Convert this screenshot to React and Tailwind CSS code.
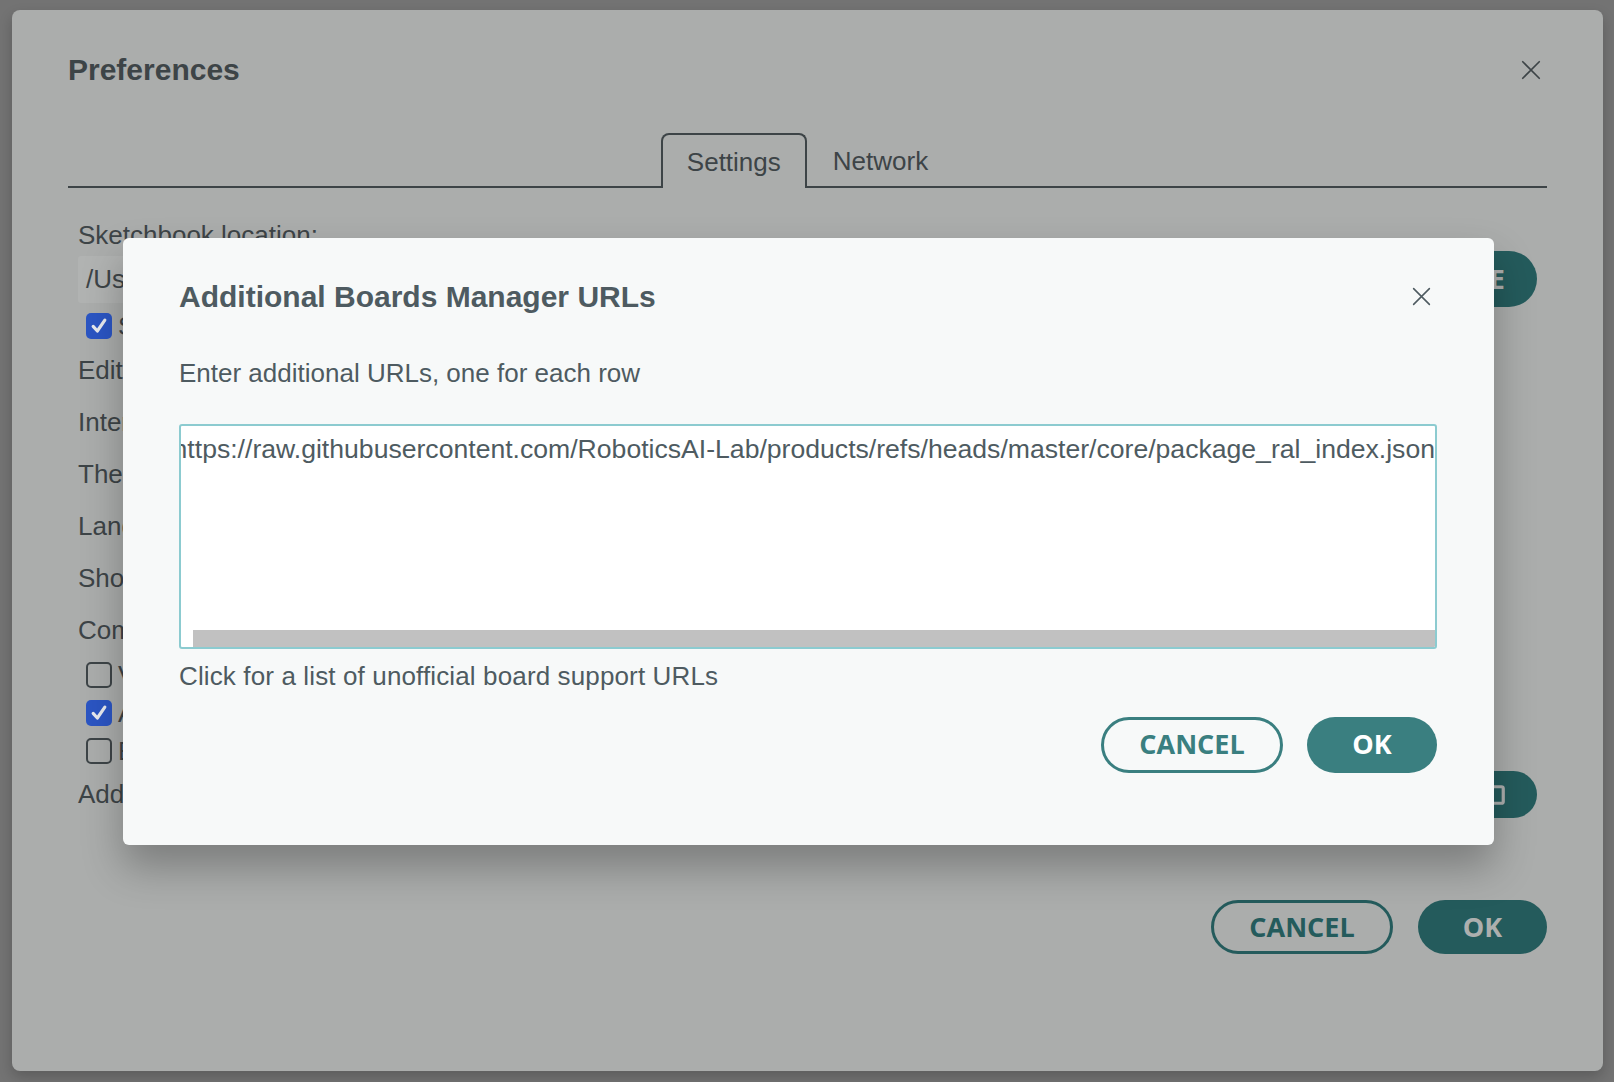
import React from "react";

const URL_TEXT =
  "https://raw.githubusercontent.com/RoboticsAI-Lab/products/refs/heads/master/core/package_ral_index.json";

function CloseIcon({ className }) {
  return (
    <svg viewBox="0 0 24 24" className={className} fill="none" stroke="currentColor" strokeWidth="1.8" strokeLinecap="round">
      <path d="M3 3 L21 21 M21 3 L3 21" />
    </svg>
  );
}

function Checkbox({ checked }) {
  if (checked) {
    return (
      <span className="flex h-[26px] w-[26px] items-center justify-center rounded-[5px] bg-[#2b55c3]">
        <svg viewBox="0 0 24 24" className="h-[20px] w-[20px]" fill="none" stroke="#e8eaee" strokeWidth="3.8" strokeLinecap="round" strokeLinejoin="round">
          <path d="M5 12.5 L10 18 L19 5" />
        </svg>
      </span>
    );
  }
  return <span className="h-[26px] w-[26px] rounded-[5px] border-2 border-[#3d4447]" />;
}

function CheckRow({ checked, label }) {
  return (
    <div className="flex h-[38px] items-center gap-[6px] pl-[8px]">
      <Checkbox checked={checked} />
      <span>{label}</span>
    </div>
  );
}

function Row({ children }) {
  return <div className="flex h-[52px] items-center">{children}</div>;
}

function Preferences() {
  return (
    <div className="flex h-[1061px] w-full flex-col rounded-[8px] bg-[#abadac] shadow-[0_6px_14px_rgba(0,0,0,0.2)]">
      <div className="px-[56px] pt-[42px]">
        <div className="flex items-center justify-between">
          <h1 className="text-[30px] font-bold leading-[36px] text-[#3d4447]">Preferences</h1>
          <CloseIcon className="mr-[5px] h-[22px] w-[22px] text-[#3d4447]" />
        </div>
        <div className="mt-[45px] flex h-[55px] text-[26px] text-[#3d4447]">
          <div className="flex-1 border-b-2 border-[#3d4447]" />
          <div className="flex items-center rounded-t-[8px] border-2 border-b-0 border-[#3d4447] px-[24px] pt-[2px]">
            Settings
          </div>
          <div className="flex items-center border-b-2 border-[#3d4447] px-[26px] pt-[4px]">Network</div>
          <div className="flex-1 border-b-2 border-[#3d4447]" />
        </div>
      </div>

      <div className="px-[66px] pt-[31px] text-[26px] text-[#3d4447]">
        <div className="leading-[32px]">Sketchbook location:</div>
        <div className="flex h-[56px] items-center gap-[24px]">
          <div className="flex h-[47px] flex-1 items-center rounded-[3px] bg-[#b1b3b2] pl-[8px]">
            /Users/developer/Documents/Arduino
          </div>
          <div className="flex h-[56px] items-center rounded-full bg-[#245b5c] px-[32px] font-['Open_Sans',sans-serif] text-[27px] font-bold text-[#adafae]">
            BROWSE
          </div>
        </div>
        <CheckRow checked label="Show files inside Sketches" />
        <div className="flex h-[51px] items-center">Editor font size:</div>
        <Row>Interface scale:</Row>
        <Row>Theme:</Row>
        <Row>Language:</Row>
        <Row>Show verbose output during</Row>
        <Row>Compiler warnings</Row>
        <CheckRow label="Verify code after upload" />
        <CheckRow checked label="Auto save" />
        <CheckRow label="Editor Quick Suggestions" />
        <div className="flex h-[49px] items-center justify-between">
          <span>Additional boards manager URLs</span>
          <div className="flex h-[47px] w-[84px] items-center justify-center rounded-full bg-[#245b5c]">
            <svg viewBox="0 0 24 24" className="h-[22px] w-[22px]" fill="none" stroke="#adafae" strokeWidth="3.5">
              <rect x="3" y="3" width="18" height="18" rx="2" />
            </svg>
          </div>
        </div>
      </div>

      <div className="mt-[81px] flex justify-end gap-[25px] pr-[56px] font-['Open_Sans',sans-serif] text-[27px] font-bold">
        <div className="flex h-[54px] w-[182px] items-center justify-center rounded-full border-[3px] border-[#245b5c] text-[#245b5c]">
          CANCEL
        </div>
        <div className="flex h-[54px] w-[129px] items-center justify-center rounded-full bg-[#245b5c] text-[#adafae]">
          OK
        </div>
      </div>
    </div>
  );
}

function BoardsDialog() {
  return (
    <div className="w-[1371px] rounded-[6px] bg-[#f7f9f9] pb-[72px] pl-[56px] pr-[57px] pt-[41px] text-[#4e5b61] shadow-[0_22px_40px_rgba(0,0,0,0.28)]">
      <div className="flex items-center justify-between">
        <h2 className="text-[30px] font-bold leading-[36px]">Additional Boards Manager URLs</h2>
        <CloseIcon className="mr-[5px] h-[21px] w-[21px]" />
      </div>
      <p className="mt-[42px] text-[26px] leading-[32px]">Enter additional URLs, one for each row</p>
      <div className="mt-[35px] flex h-[225px] flex-col overflow-hidden rounded-[3px] border-2 border-[#8ccbd0] bg-white">
        <div className="flex flex-1 justify-end overflow-hidden pt-[7px]">
          <span className="whitespace-nowrap text-[26.6px] leading-[32px]">{URL_TEXT}</span>
        </div>
        <div className="h-[17px] pl-[12px]">
          <div className="h-full bg-[#c1c1c1]" />
        </div>
      </div>
      <p className="mt-[11px] text-[26px] leading-[32px] tracking-[0.005em]">Click for a list of unofficial board support URLs</p>
      <div className="mt-[25px] flex justify-end gap-[24px] font-['Open_Sans',sans-serif] text-[27px] font-bold">
        <div className="flex h-[56px] w-[182px] items-center justify-center rounded-full border-[3px] border-[#3a7f80] text-[#3a7f80]">
          CANCEL
        </div>
        <div className="flex h-[56px] w-[130px] items-center justify-center rounded-full bg-[#3a7f80] text-white">
          OK
        </div>
      </div>
    </div>
  );
}

export default function App() {
  return (
    <div className="relative h-[1082px] w-full overflow-hidden bg-[#737373] pl-[12px] pr-[11px] pt-[10px] font-['Liberation_Sans',Arial,sans-serif]">
      <Preferences />
      <div className="absolute inset-0 flex items-center justify-center pl-[3px]">
        <BoardsDialog />
      </div>
    </div>
  );
}
